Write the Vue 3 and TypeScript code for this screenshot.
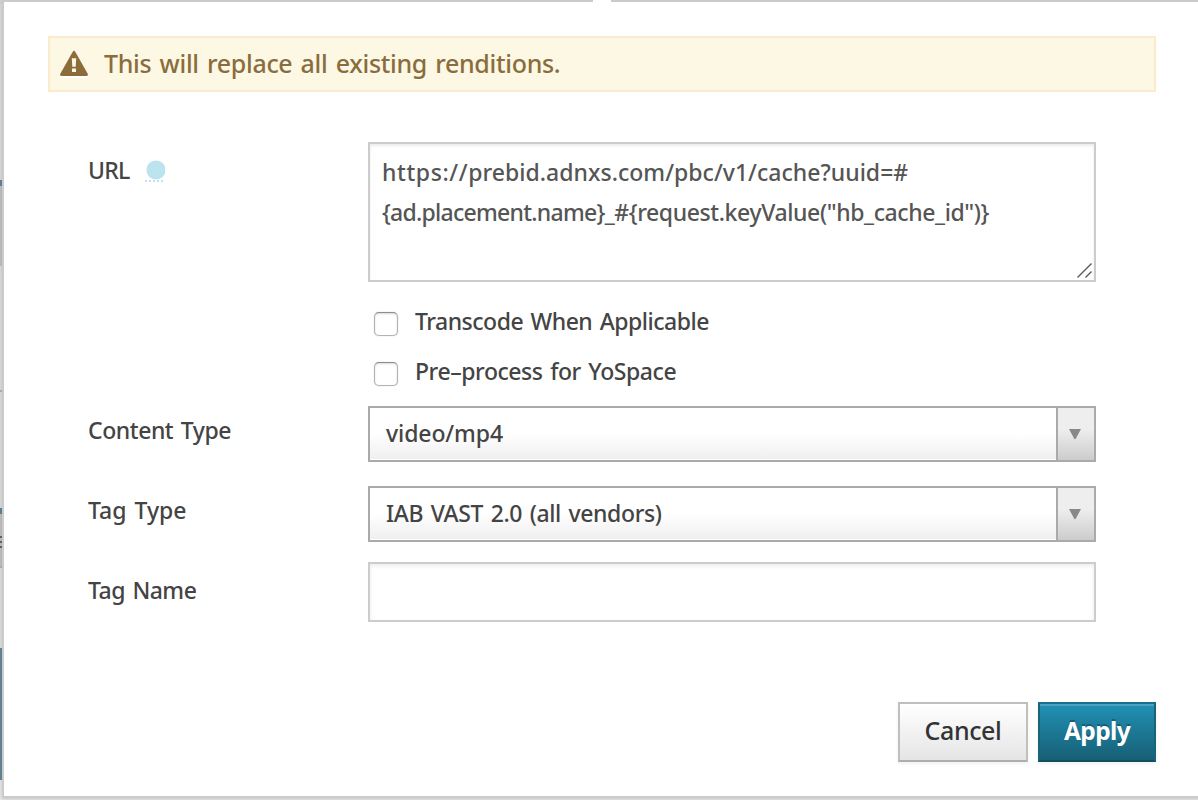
<script setup lang="ts">
import { ref } from 'vue'

const firstLine = ['https://', 'prebid.adnxs.com/pbc/v1/cache?uuid=#']
const secondLine = ['{ad.placement.name}', '_#{request.keyValue("hb_cache_id")}']
const transcode = ref(false)
const yoSpace = ref(false)
</script>

<template>
  <div class="page">
    <div class="backdrop"><i class="menu-mark"></i></div>
    <main class="dialog">
      <i class="notch"></i>
      <div class="alert">
        <svg class="warn" width="30" height="30" viewBox="0 0 30 30">
          <path d="M12.6 2.2Q14 -.2 15.4 2.2L27.7 24.2Q28.7 26.8 26 27H2Q-.7 26.8 .3 24.2Z" fill="#fff" transform="translate(0 1)" />
          <path d="M12.6 1.9Q14 -.4 15.4 1.9L27.7 23.8Q28.6 26 26 26H2Q-.6 26 .3 23.8Z" fill="#8a6d3b" />
          <path d="M11.8 8.2h4.4l-.5 8.6h-3.4zM12 18.4h4v3.7h-4z" fill="#fcf8e3" />
        </svg>
        <span class="t alert-text">This will replace all existing renditions.</span>
      </div>

      <form class="form" @submit.prevent>
        <div class="row url-row">
          <label class="label"><span class="t l-url">URL</span><i class="help"></i></label>
          <div class="area">
            <span class="t line"><span class="scheme">{{ firstLine[0] }}</span><span class="path">{{ firstLine[1] }}</span></span>
            <span class="t line"><span class="macro">{{ secondLine[0] }}</span><span class="query">{{ secondLine[1] }}</span></span>
            <svg class="grip" width="16" height="16" viewBox="0 0 16 16">
              <path d="M1 15.2L14.7 1.5M9 15.2L14.7 9.5" stroke="#fff" stroke-width="3" fill="none" />
              <path d="M.5 14.5L14.5.5M8.5 14.5L14.5 8.5" stroke="#58585c" stroke-width="1.4" fill="none" />
            </svg>
          </div>
        </div>
        <label class="check"><input v-model="transcode" type="checkbox" /><span class="t l-trans">Transcode When Applicable</span></label>
        <label class="check"><input v-model="yoSpace" type="checkbox" /><span class="t l-yo">Pre–process for YoSpace</span></label>
        <div class="selects">
          <div class="row select-row">
            <label class="label"><span class="t l-content">Content Type</span></label>
            <div class="select">
              <div class="value"><span class="t v-mp4">video/mp4</span></div>
              <div class="arrow"><svg width="12" height="10" viewBox="0 0 12 10"><path d="M0 0H12L6.6 10H5.4Z" fill="#888" /></svg></div>
            </div>
          </div>
          <div class="row select-row">
            <label class="label"><span class="t l-tag">Tag Type</span></label>
            <div class="select">
              <div class="value"><span class="t v-vast">IAB VAST 2.0 (all vendors)</span></div>
              <div class="arrow"><svg width="12" height="10" viewBox="0 0 12 10"><path d="M0 0H12L6.6 10H5.4Z" fill="#888" /></svg></div>
            </div>
          </div>
        </div>
        <div class="row name-row">
          <label class="label"><span class="t l-name">Tag Name</span></label>
          <div class="input"></div>
        </div>
      </form>

      <footer class="actions">
        <button class="btn cancel" type="button"><span class="t b-cancel">Cancel</span></button>
        <button class="btn apply" type="button"><span class="t b-apply">Apply</span></button>
      </footer>
    </main>
  </div>
</template>

<style>
body { margin: 0; overflow: hidden; background: #fff; }
</style>

<style scoped>
.page {
  display: flex;
  width: 1198px;
  height: 800px;
  overflow: hidden;
  box-sizing: border-box;
  background: #e7e7e7;
  font-family: "Noto Sans", "Open Sans", sans-serif;
  font-size: 23px;
  font-weight: 500;
  word-spacing: 2px;
  color: #444;
}
.t { white-space: nowrap; }
.backdrop {
  position: relative;
  flex: none;
  width: 2px;
  height: 800px;
  background: linear-gradient(
    #c5d8dc 0 4px, #dadada 4px 180px, #5e8796 180px 186px, #c0c0c0 186px 266px,
    #dcdcdc 266px 390px, #a9b5c2 390px 392px, #dcdcdc 392px 508px, #5e8796 508px 514px,
    #c0c0c0 514px 566px, #a9b5c2 566px 568px, #dedede 568px 648px, #648896 648px 780px, #e7e7e7 780px);
}
.menu-mark {
  position: absolute;
  left: 0;
  top: 536px;
  width: 2px;
  height: 12px;
  background: linear-gradient(#666 0 2px, transparent 2px 5px, #666 5px 7px, transparent 7px 10px, #666 10px 12px);
}
.dialog {
  position: relative;
  box-sizing: border-box;
  flex: none;
  width: 1200px;
  height: 798px;
  border: 2px solid #cbcbcb;
  background: #fff;
  padding: 34px 0 0 44px;
  box-shadow: 0 1px 4px rgba(0, 0, 0, 0.15);
}
.notch {
  position: absolute;
  left: 589px;
  top: -2px;
  width: 18px;
  height: 2px;
  background: #fff;
}
.alert {
  display: flex;
  align-items: center;
  box-sizing: border-box;
  width: 1108px;
  height: 56px;
  border: 2px solid #faebcc;
  background: #fcf8e3;
  padding-left: 10px;
  color: #8a6d3b;
}
.warn { flex: none; margin: 2px 14px 0 0; }
.alert-text { font-size: 25px; line-height: 30px; margin-top: -2px; letter-spacing: -0.31px; text-shadow: 0 1px 0 rgba(255, 255, 255, 0.6); }
.form { margin: 50px 0 0 40px; width: 1008px; }
.row { display: flex; align-items: flex-start; }
.label { display: flex; width: 280px; height: 32px; line-height: 32px; }
.l-url { letter-spacing: -0.7px; }
.l-trans { letter-spacing: -0.5px; }
.l-yo { letter-spacing: -0.44px; }
.l-content { letter-spacing: -0.44px; }
.l-tag { letter-spacing: 0; }
.l-name { letter-spacing: -0.52px; }
.v-mp4 { letter-spacing: -0.1px; }
.v-vast { letter-spacing: -0.38px; }
.scheme { letter-spacing: 0.6px; }
.path { letter-spacing: 0.02px; }
.macro { letter-spacing: -0.73px; }
.query { letter-spacing: -0.39px; }
.url-row { height: 140px; margin-bottom: 16px; }
.url-row .label { margin-top: 12px; }
.help {
  box-sizing: border-box;
  width: 20px;
  height: 22px;
  margin: 6px 0 0 15px;
  background:
    repeating-linear-gradient(90deg, #bce4ee 0 2px, transparent 2px 4px) 0 20px / 20px 2px no-repeat,
    radial-gradient(circle at 11px 10px, #bce4ee 9.2px, transparent 9.8px);
}
.area {
  position: relative;
  box-sizing: border-box;
  width: 728px;
  height: 140px;
  border: 2px solid #ccc;
  box-shadow: inset 0 2px 3px rgba(0, 0, 0, 0.08);
  padding: 8px 12px;
  color: #555;
}
.line { display: block; height: 40px; line-height: 40px; }
.grip { position: absolute; right: 1px; bottom: 1px; }
.check { display: flex; align-items: center; height: 50px; margin-left: 286px; }
.check input {
  appearance: none;
  box-sizing: border-box;
  flex: none;
  width: 24px;
  height: 24px;
  margin: 2px 17px 0 0;
  border: 1px solid #b4b4b4;
  border-top-color: #8e8e8e;
  border-radius: 5px;
  background: #fff;
  box-shadow: inset 0 1px 2px rgba(0, 0, 0, 0.16), 0 0 1px rgba(0, 0, 0, 0.3);
}
.check .t { margin-top: -4px; }
.selects { padding-top: 8px; }
.select-row { height: 80px; }
.select-row .label { margin-top: 8px; }
.select {
  display: flex;
  box-sizing: border-box;
  width: 728px;
  height: 56px;
  border: 2px solid #aaa;
}
.value {
  display: flex;
  align-items: center;
  flex: 1;
  padding: 0 0 2px 16px;
  background: linear-gradient(#fff 0 50%, #eee 100%);
  box-shadow: inset 0 -1px 0 #fff;
}
.arrow {
  display: flex;
  align-items: center;
  justify-content: center;
  box-sizing: border-box;
  width: 38px;
  border-left: 2px solid #aaa;
  padding-right: 2px;
  background: linear-gradient(#eee 0 40%, #ccc 100%);
}
.name-row { margin-top: -4px; }
.name-row .label { margin-top: 12px; }
.input {
  box-sizing: border-box;
  width: 728px;
  height: 60px;
  border: 2px solid #ccc;
  box-shadow: inset 0 2px 4px rgba(0, 0, 0, 0.08);
}
.actions { display: flex; justify-content: flex-end; gap: 10px; width: 1108px; margin-top: 80px; }
.btn {
  box-sizing: border-box;
  height: 60px;
  padding: 0;
  font: 500 25px "Noto Sans", "Open Sans", sans-serif;
}
.btn .t { position: relative; top: -2px; }
.cancel {
  width: 130px;
  border: 2px solid #bfbfbf;
  border-bottom-color: #adadad;
  background: linear-gradient(#fff, #e5e5e5);
  color: #333;
  letter-spacing: -0.4px;
  box-shadow: 0 2px 4px rgba(0, 0, 0, 0.06);
}
.apply {
  width: 118px;
  border: 2px solid #186378;
  border-color: #1c6f89 #18647a #124f61;
  background: linear-gradient(#2191b5, #175f75);
  color: #fff;
  font-weight: 700;
  font-size: 24.5px;
  letter-spacing: -0.6px;
  box-shadow: inset 0 2px 0 #4da3bf, 0 2px 4px rgba(0, 0, 0, 0.06);
  text-shadow: 0 -2px 0 rgba(0, 0, 0, 0.25);
}
</style>
